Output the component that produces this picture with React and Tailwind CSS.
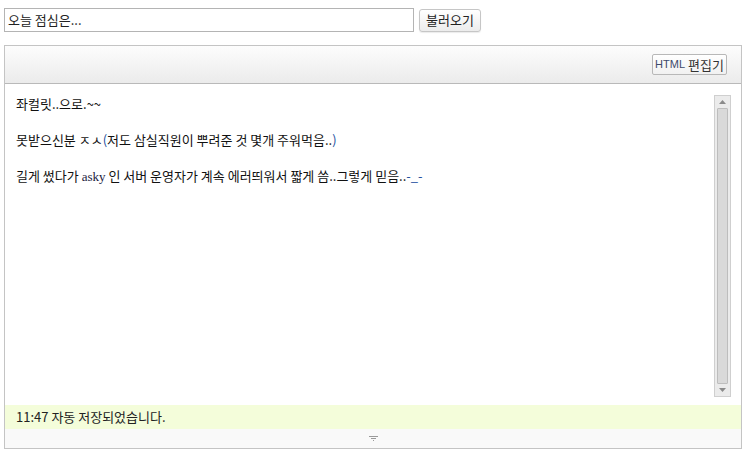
import React from "react";

const KR = { fontFamily: '"Noto Sans CJK KR", "Noto Sans", sans-serif' };

function ScrollBar() {
  return (
    <div className="flex h-full w-[17px] flex-col border border-[#cfcfcf] bg-[#ebebeb]">
      <div className="flex h-[12px] items-center justify-center">
        <svg width="7" height="4" viewBox="0 0 7 4"><path d="M0 4 L3.5 0 L7 4Z" fill="#8a8a8a" /></svg>
      </div>
      <div className="mx-[2px] flex-1 rounded-[1px] border border-[#bdbdbd] bg-[#d9d9d9]" />
      <div className="flex h-[12px] items-center justify-center">
        <svg width="7" height="4" viewBox="0 0 7 4"><path d="M0 0 L3.5 4 L7 0Z" fill="#8a8a8a" /></svg>
      </div>
    </div>
  );
}

export default function App() {
  return (
    <div className="h-[455px] w-[744px] overflow-hidden bg-white text-[13px] text-black" style={KR}>
      <div className="ml-[4px] mt-[8px] flex items-center gap-[5px]">
        <div className="flex h-[24px] w-[410px] items-center border border-[#b4b4b4] px-[3px] text-[13px] text-[#222]">
          오늘 점심은...
        </div>
        <button className="flex h-[23px] w-[62px] items-center justify-center rounded-[3px] border border-[#c6c6c6] bg-gradient-to-b from-white to-[#ececec] text-[13px] text-[#222] shadow-[0_1px_1px_rgba(0,0,0,0.08)]">
          불러오기
        </button>
      </div>

      <div className="ml-[4px] mt-[13px] flex h-[404px] w-[738px] flex-col border border-[#c4c4c4]">
        <div className="flex h-[38px] shrink-0 items-center justify-end border-b border-[#b9b9b9] bg-gradient-to-b from-[#fdfdfd] to-[#ebebeb] pr-[14px]">
          <button className="flex h-[21px] w-[75px] items-center justify-center gap-[3px] rounded-[2px] border border-[#b8b8b8] bg-gradient-to-b from-white to-[#f1f1f1]">
            <span className="text-[11px] text-[#3d4a6b]" style={{ fontFamily: '"Liberation Sans", sans-serif' }}>HTML</span>
            <span className="text-[13px] text-[#333]">편집기</span>
          </button>
        </div>

        <div className="flex min-h-0 flex-1">
          <div className="flex-1 pl-[11px] pt-[11px] text-[13px] leading-[18px] text-[#111]">
            <p>좌컬릿..으로.~~</p>
            <p>&nbsp;</p>
            <p>
              못받으신분 ㅈㅅ<span className="text-[#1d4f9e]">(</span>저도 삼실직원이 뿌려준 것 몇개 주워먹음..<span className="text-[#1d4f9e]">)</span>
            </p>
            <p>&nbsp;</p>
            <p>
              길게 썼다가 <span className="text-[13px] text-[#1a1a40]" style={{ fontFamily: '"Liberation Serif", serif' }}>asky</span> 인 서버 운영자가 계속 에러띄워서 짧게 씀..그렇게 믿음..<span className="text-[#1d4f9e]">-_-</span>
            </p>
          </div>
          <div className="pb-[8px] pr-[10px] pt-[11px]">
            <ScrollBar />
          </div>
        </div>

        <div className="flex h-[24px] shrink-0 items-center bg-[#f4fdda] pl-[11px] text-[13px] text-[#222]">
          11:47 자동 저장되었습니다.
        </div>
        <div className="flex h-[19px] shrink-0 items-center justify-center bg-[#f9f9f9]">
          <svg width="9" height="6" viewBox="0 0 9 6">
            <rect x="0" y="0" width="9" height="1" fill="#9a9a9a" />
            <rect x="2" y="2" width="5" height="1" fill="#9a9a9a" />
            <rect x="4" y="4" width="1" height="1" fill="#9a9a9a" />
          </svg>
        </div>
      </div>
    </div>
  );
}
